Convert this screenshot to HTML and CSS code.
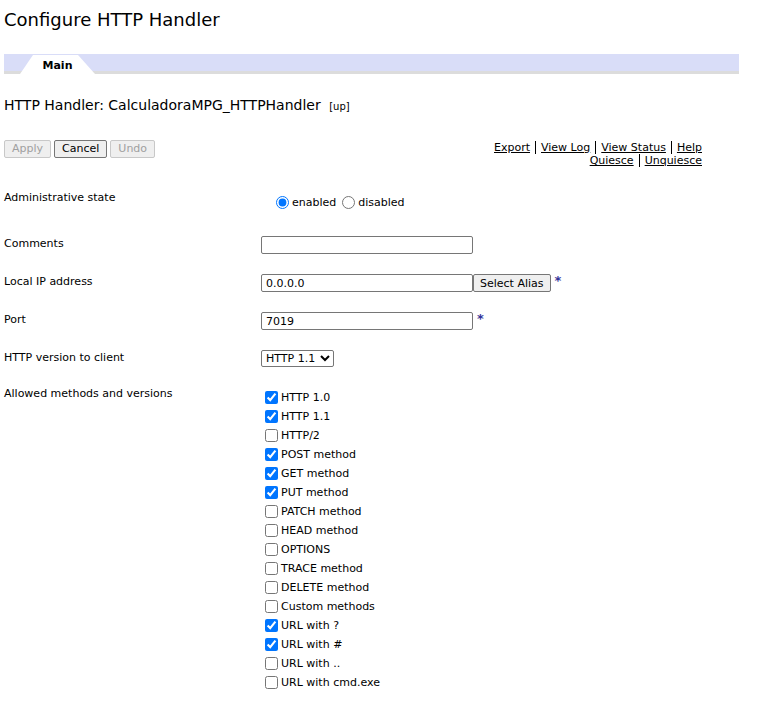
FILE: index.html
```html
<!DOCTYPE html>
<html>
<head>
<meta charset="utf-8">
<title>Configure HTTP Handler</title>
<link rel="stylesheet" href="styles.css">
</head>
<body>
<h1 class="title">Configure HTTP Handler</h1>
<div class="tabbar">
  <div class="tab"><span class="tab-label">Main</span></div>
</div>
<h2 class="subtitle">HTTP Handler: CalculadoraMPG_HTTPHandler <a class="up" href="#">[up]</a></h2>
<div class="toolbar">
  <div class="buttons">
    <button class="btn" disabled>Apply</button>
    <button class="btn btn-active">Cancel</button>
    <button class="btn" disabled>Undo</button>
  </div>
  <div class="links">
    <div class="linkline"><a href="#">Export</a><span class="sep"></span><a href="#">View Log</a><span class="sep"></span><a href="#">View Status</a><span class="sep"></span><a href="#">Help</a></div>
    <div class="linkline"><a href="#">Quiesce</a><span class="sep"></span><a href="#">Unquiesce</a></div>
  </div>
</div>
<div class="form">
  <div class="row row-admin">
    <div class="label">Administrative state</div>
    <div class="value radios">
      <label class="opt"><input type="radio" name="st" checked>enabled</label>
      <label class="opt"><input type="radio" name="st">disabled</label>
    </div>
  </div>
  <div class="row">
    <div class="label">Comments</div>
    <div class="value"><input class="text" type="text"></div>
  </div>
  <div class="row">
    <div class="label">Local IP address</div>
    <div class="value"><input class="text" type="text" value="0.0.0.0"><button class="alias">Select Alias</button><span class="req">*</span></div>
  </div>
  <div class="row">
    <div class="label">Port</div>
    <div class="value"><input class="text" type="text" value="7019"><span class="req">*</span></div>
  </div>
  <div class="row">
    <div class="label">HTTP version to client</div>
    <div class="value"><select class="sel"><option>HTTP 1.1</option><option>HTTP 1.0</option></select></div>
  </div>
  <div class="row row-methods">
    <div class="label">Allowed methods and versions</div>
    <div class="value checks">
      <label class="chk"><input type="checkbox" checked>HTTP 1.0</label>
      <label class="chk"><input type="checkbox" checked>HTTP 1.1</label>
      <label class="chk"><input type="checkbox">HTTP/2</label>
      <label class="chk"><input type="checkbox" checked>POST method</label>
      <label class="chk"><input type="checkbox" checked>GET method</label>
      <label class="chk"><input type="checkbox" checked>PUT method</label>
      <label class="chk"><input type="checkbox">PATCH method</label>
      <label class="chk"><input type="checkbox">HEAD method</label>
      <label class="chk"><input type="checkbox">OPTIONS</label>
      <label class="chk"><input type="checkbox">TRACE method</label>
      <label class="chk"><input type="checkbox">DELETE method</label>
      <label class="chk"><input type="checkbox">Custom methods</label>
      <label class="chk"><input type="checkbox" checked>URL with ?</label>
      <label class="chk"><input type="checkbox" checked>URL with #</label>
      <label class="chk"><input type="checkbox">URL with ..</label>
      <label class="chk"><input type="checkbox">URL with cmd.exe</label>
    </div>
  </div>
</div>
</body>
</html>
```
FILE: styles.css
```css
html, body {
  margin: 0;
  padding: 0;
  background: #fff;
}
body {
  padding: 0 4px;
  font-family: "DejaVu Sans", sans-serif;
  font-size: 11px;
  color: #000;
}
.title {
  margin: 0;
  padding-top: 9px;
  font-size: 18px;
  font-weight: normal;
  line-height: 21px;
}
.tabbar {
  margin-top: 24px;
  width: 735px;
  height: 17px;
  background: #d9ddf8;
  border-bottom: 3px solid #dcdcdc;
  position: relative;
}
.tab {
  position: absolute;
  left: 16px;
  top: 1px;
  width: 75px;
  height: 19px;
  background: #fff;
  clip-path: polygon(13px 0, 58px 0, 75px 100%, 0 100%);
  display: flex;
  justify-content: center;
  align-items: center;
}
.tab-label {
  font-weight: bold;
  font-size: 11px;
  padding-top: 1px;
}
.subtitle {
  margin: 0;
  margin-top: 23px;
  font-size: 14px;
  font-weight: normal;
  line-height: 17px;
}
.up {
  font-size: 10px;
  color: #000;
  text-decoration: none;
  margin-left: 4px;
}
.toolbar {
  margin-top: 25px;
  width: 698px;
  display: flex;
  justify-content: space-between;
  align-items: flex-start;
}
.buttons {
  display: flex;
  gap: 3px;
}
.btn {
  font-family: "DejaVu Sans", sans-serif;
  font-size: 11px;
  height: 18px;
  padding: 0 7px;
  border: 1px solid #c8c8c8;
  background: #efefef;
  color: #a0a0a0;
  border-radius: 2px;
  line-height: 16px;
}
.btn-active {
  color: #000;
  border-color: #767676;
}
.links {
  display: flex;
  flex-direction: column;
  align-items: flex-end;
  font-size: 11px;
  line-height: 13px;
  padding-top: 1px;
}
.linkline {
  display: flex;
  align-items: stretch;
}
.links a {
  color: #000;
  text-decoration: underline;
}
.sep {
  width: 1px;
  background: #000;
  margin: 0 5px 0 5px;
}
.form {
  margin-top: 24px;
}
.row {
  display: grid;
  grid-template-columns: 257px 1fr;
  margin-bottom: 20px;
}
.label {
  padding-top: 1px;
  line-height: 13px;
}
.value {
  display: flex;
  align-items: center;
}
.row-admin {
  margin-bottom: 27px;
}
.row-admin .label {
  padding-top: 0;
}
.radios {
  padding-top: 5px;
  padding-left: 10px;
  align-items: center;
}
.opt {
  display: inline-flex;
  align-items: center;
  margin-right: 1px;
  line-height: 13px;
}
.opt input {
  margin: 0 3px 0 5px;
  width: 13px;
  height: 13px;
}
.text {
  width: 212px;
  height: 18px;
  box-sizing: border-box;
  border: 1px solid #767676;
  border-radius: 2px;
  padding: 0 4px;
  font-family: "DejaVu Sans", sans-serif;
  font-size: 11px;
  margin: 0;
}
.alias {
  height: 18px;
  box-sizing: border-box;
  border: 1px solid #767676;
  border-radius: 2px;
  background: #efefef;
  padding: 0 6px;
  font-family: "DejaVu Sans", sans-serif;
  font-size: 11px;
  margin: 0;
  color: #000;
}
.req {
  color: #333399;
  font-weight: bold;
  font-size: 13px;
  margin-left: 4px;
  align-self: flex-start;
  line-height: 14px;
}
.sel {
  height: 17px;
  font-family: "DejaVu Sans", sans-serif;
  font-size: 11px;
  border: 1px solid #767676;
  border-radius: 2px;
  padding: 0;
  margin: 0;
  background: #fff;
  width: 73px;
}
.row-methods .label {
  padding-top: 0;
}
.checks {
  flex-direction: column;
  align-items: flex-start;
  padding-top: 1px;
}
.chk {
  display: flex;
  align-items: center;
  height: 19px;
  line-height: 13px;
}
.chk input {
  margin: 0 3px 0 4px;
  width: 13px;
  height: 13px;
}
```
